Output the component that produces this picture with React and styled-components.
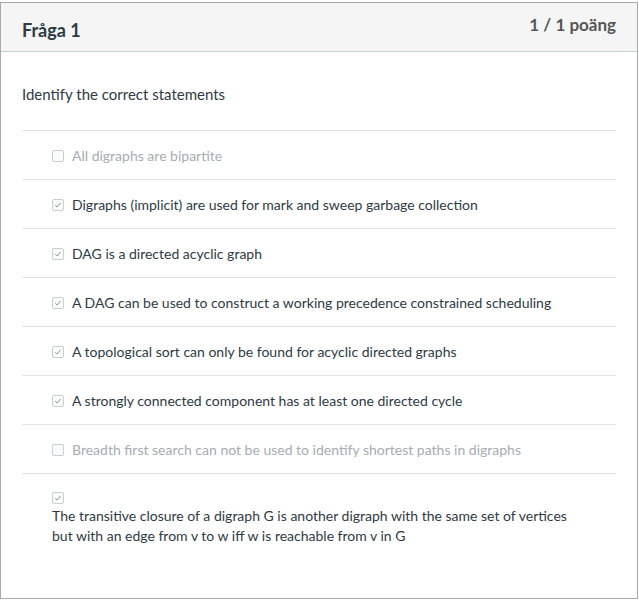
import React from "react";
import styled, { createGlobalStyle } from "styled-components";

const GlobalStyle = createGlobalStyle`
  html, body {
    margin: 0;
    padding: 0;
    background: #ffffff;
  }
  body {
    font-family: Lato, "Open Sans", "Liberation Sans", sans-serif;
    color: #2d3b45;
  }
`;

const Page = styled.div`
  padding-top: 2px;
  width: 638px;
`;

const QuestionBox = styled.div`
  border: 1px solid #a8a8a8;
  height: 597px;
  box-sizing: border-box;
  display: flex;
  flex-direction: column;
`;

const Header = styled.div`
  display: flex;
  justify-content: space-between;
  align-items: flex-start;
  height: 48px;
  padding: 0 21px 0 21px;
  background: #f5f5f5;
  border-bottom: 1px solid #c7cdd1;
  .header {
    &__title {
      margin: 0;
      font-size: 18px;
      font-weight: bold;
      line-height: 24px;
      padding-top: 15px;
      color: #2d3b45;
    }
    &__points {
      font-size: 17px;
      font-weight: bold;
      line-height: 20px;
      padding-top: 12px;
      color: #555555;
    }
  }
`;

const Body = styled.div`
  padding: 0 21px;
`;

const QuestionText = styled.p`
  margin: 0;
  padding: 30px 0 24px;
  font-size: 15px;
  line-height: 24px;
  color: #2d3b45;
`;

const AnswerRow = styled.div`
  box-sizing: border-box;
  display: flex;
  flex-direction: ${(p) => (p.$stacked ? "column" : "row")};
  align-items: ${(p) => (p.$stacked ? "flex-start" : "center")};
  gap: ${(p) => (p.$stacked ? "2px" : "8px")};
  height: ${(p) => (p.$stacked ? "auto" : "49px")};
  padding: ${(p) => (p.$stacked ? "18px 0 0 30px" : "2px 0 0 30px")};
  border-top: 1px solid #dfe3e6;
  font-size: 14px;
  line-height: 20px;
  color: ${(p) => (p.$checked ? "#2d3b45" : "#a5adb2")};
`;

const Box = styled.span`
  flex: none;
  width: 10px;
  height: 10px;
  border: 1px solid #c8cdd0;
  border-radius: 2px;
  background: #fbfbfb;
  display: flex;
  align-items: center;
  justify-content: center;
`;

function CheckBox({ checked }) {
  return (
    <Box>
      {checked && (
        <svg width="8" height="8" viewBox="0 0 8 8">
          <path
            d="M1.3 4.2 L3.1 6 L6.7 1.8"
            fill="none"
            stroke="#8a949a"
            strokeWidth="1"
          />
        </svg>
      )}
    </Box>
  );
}

const answers = [
  { text: "All digraphs are bipartite", checked: false },
  {
    text: "Digraphs (implicit) are used for mark and sweep garbage collection",
    checked: true,
  },
  { text: "DAG is a directed acyclic graph", checked: true },
  {
    text: "A DAG can be used to construct a working precedence constrained scheduling",
    checked: true,
  },
  {
    text: "A topological sort can only be found for acyclic directed graphs",
    checked: true,
  },
  {
    text: "A strongly connected component has at least one directed cycle",
    checked: true,
  },
  {
    text: "Breadth first search can not be used to identify shortest paths in digraphs",
    checked: false,
  },
];

export default function App() {
  return (
    <>
      <GlobalStyle />
      <Page>
        <QuestionBox>
          <Header>
            <h2 className="header__title">Fråga 1</h2>
            <span className="header__points">1 / 1 poäng</span>
          </Header>
          <Body>
            <QuestionText>Identify the correct statements</QuestionText>
            {answers.map((a) => (
              <AnswerRow key={a.text} $checked={a.checked}>
                <CheckBox checked={a.checked} />
                <span>{a.text}</span>
              </AnswerRow>
            ))}
            <AnswerRow $checked $stacked>
              <CheckBox checked />
              <span>
                The transitive closure of a digraph G is another digraph with the
                same set of vertices
                <br />
                but with an edge from v to w iff w is reachable from v in G
              </span>
            </AnswerRow>
          </Body>
        </QuestionBox>
      </Page>
    </>
  );
}
